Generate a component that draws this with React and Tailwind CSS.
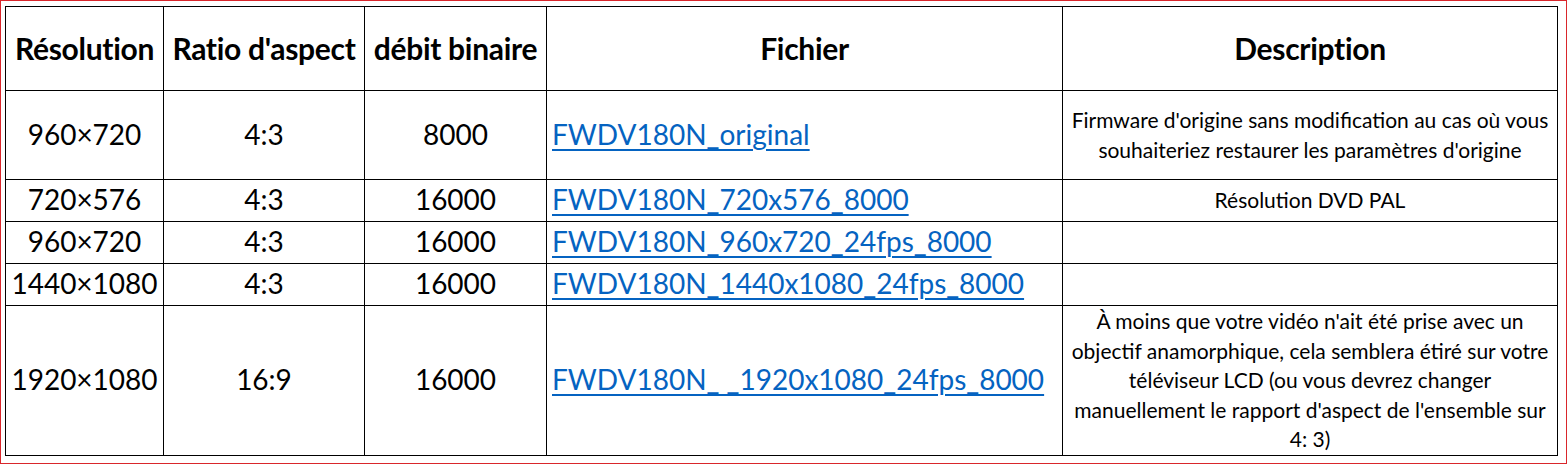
import React from 'react';

const rows = [
  {
    res: '960×720',
    ratio: '4:3',
    rate: '8000',
    file: 'FWDV180N_original',
    desc: ["Firmware d'origine sans modification au cas où vous", "souhaiteriez restaurer les paramètres d'origine"],
    h: 'h-[89px]',
  },
  { res: '720×576', ratio: '4:3', rate: '16000', file: 'FWDV180N_720x576_8000', desc: ['Résolution DVD PAL'], h: 'h-[42px]' },
  { res: '960×720', ratio: '4:3', rate: '16000', file: 'FWDV180N_960x720_24fps_8000', desc: [], h: 'h-[42px]' },
  { res: '1440×1080', ratio: '4:3', rate: '16000', file: 'FWDV180N_1440x1080_24fps_8000', desc: [], h: 'h-[42px]' },
  {
    res: '1920×1080',
    ratio: '16:9',
    rate: '16000',
    file: 'FWDV180N_\u00a0_1920x1080_24fps_8000',
    desc: [
      "À moins que votre vidéo n'ait été prise avec un",
      'objectif anamorphique, cela semblera étiré sur votre',
      'téléviseur LCD (ou vous devrez changer',
      "manuellement le rapport d'aspect de l'ensemble sur",
      '4: 3)',
    ],
    h: 'h-[147px]',
  },
];

export default function App() {
  return (
    <div className="w-[1567px] h-[464px] bg-white border border-[#d9262b] pl-[4px] pt-[5px] font-['Lato','Liberation_Sans',sans-serif] text-black overflow-hidden">
      <table className="border-collapse table-fixed w-[1552px]">
        <colgroup>
          <col className="w-[158px]" />
          <col className="w-[201px]" />
          <col className="w-[182px]" />
          <col className="w-[516px]" />
          <col className="w-[495px]" />
        </colgroup>
        <thead>
          <tr className="h-[84px] text-[30px] font-bold">
            <th className="border border-black p-0 text-center whitespace-nowrap tracking-[-0.3px]">Résolution</th>
            <th className="border border-black p-0 text-center whitespace-nowrap tracking-[-0.3px]">Ratio d'aspect</th>
            <th className="border border-black p-0 text-center whitespace-nowrap tracking-[-0.3px]">débit binaire</th>
            <th className="border border-black p-0 text-center tracking-[-0.3px]">Fichier</th>
            <th className="border border-black p-0 text-center tracking-[-0.3px]">Description</th>
          </tr>
        </thead>
        <tbody>
          {rows.map((r, i) => (
            <tr key={i} className={r.h}>
              <td className="border border-black p-0 pb-[3px] text-center text-[28px] leading-[32px] whitespace-nowrap">{r.res}</td>
              <td className="border border-black p-0 pb-[3px] text-center text-[28px] leading-[32px]">{r.ratio}</td>
              <td className="border border-black p-0 pb-[3px] text-center text-[28px] leading-[32px]">{r.rate}</td>
              <td className="border border-black pt-0 pb-[3px] pl-[5px] pr-0 text-left text-[28px] leading-[32px] whitespace-nowrap">
                <a href="#" className="text-[#0563c1] underline underline-offset-[4px] decoration-[2px]">
                  {r.file}
                </a>
              </td>
              <td className="border border-black p-0 pb-[1px] text-center text-[21px] leading-[29.5px]">
                {r.desc.map((l, j) => (
                  <div key={j} className="whitespace-nowrap">{l}</div>
                ))}
              </td>
            </tr>
          ))}
        </tbody>
      </table>
    </div>
  );
}
